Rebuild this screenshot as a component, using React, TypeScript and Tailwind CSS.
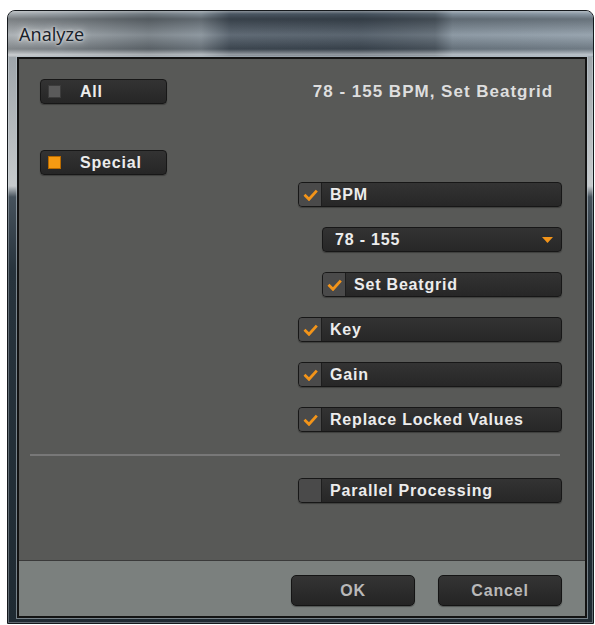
import React from "react";

const ORANGE = "#f39419";

function Tick() {
  return (
    <svg width="15" height="12" viewBox="0 0 15 12" fill="none">
      <path d="M1.5 5.8 L6 10.3 L13.8 1.6" stroke={ORANGE} strokeWidth="2.8" />
    </svg>
  );
}

function CheckRow({ label, checked }: { label: string; checked: boolean }) {
  return (
    <div className="flex h-[25px] overflow-hidden rounded-[4px] border border-[#171717] bg-[linear-gradient(180deg,#333333,#272727)] shadow-[0_1px_1px_rgba(0,0,0,0.3)]">
      <div className="flex w-[23px] items-center justify-center border-r border-[#1e1e1e] bg-[#4a4a4a]">
        {checked && <Tick />}
      </div>
      <span className="flex items-center pl-[8px] text-[16px] font-bold tracking-[0.8px] text-[#ececec]">
        {label}
      </span>
    </div>
  );
}

function ModeButton({ label, active }: { label: string; active: boolean }) {
  return (
    <div className="flex h-[25px] w-[127px] items-center rounded-[4px] border border-[#171717] bg-[linear-gradient(180deg,#333333,#262626)] pl-[7px] shadow-[0_1px_1px_rgba(0,0,0,0.3)]">
      <div
        className={
          active
            ? "h-[13px] w-[13px] border border-[#b86a00] bg-[#f59a12]"
            : "h-[13px] w-[13px] border border-[#3c3c3c] bg-[#5a5a5a]"
        }
      />
      <span className="ml-[19px] text-[16px] font-bold tracking-[0.8px] text-[#ececec]">
        {label}
      </span>
    </div>
  );
}

function FooterButton({ label }: { label: string }) {
  return (
    <button className="flex h-[31px] w-[124px] items-center justify-center rounded-[5px] border border-[#141414] bg-[linear-gradient(180deg,#343434,#242424)] text-[16px] font-bold tracking-[0.8px] text-[#b9b9b9] shadow-[0_1px_1px_rgba(0,0,0,0.35)]">
      {label}
    </button>
  );
}

export default function App() {
  return (
    <div className="h-[625px] w-[595px] overflow-hidden bg-white pt-[10px] pl-[7px] font-['Liberation_Sans',Arial,sans-serif]">
      {/* window frame */}
      <div className="flex h-[614px] w-[587px] flex-col rounded-t-[8px] border border-[#15191d] bg-[linear-gradient(180deg,#8e979e_0px,#a9afb3_80px,#c6cacc_175px,#46525c_186px,#27333c_260px,#1f2a32_100%)] shadow-[inset_0_0_0_1px_rgba(220,228,235,0.35)]">
        {/* title bar */}
        <div className="h-[46px] shrink-0 rounded-t-[7px] bg-[linear-gradient(180deg,rgba(255,255,255,0.35)_0px,rgba(255,255,255,0)_3px,rgba(0,0,0,0.25)_8px,rgba(255,255,255,0.12)_24px,rgba(0,0,0,0.2)_38px,rgba(255,255,255,0.45)_44px,rgba(255,255,255,0.1)_46px),linear-gradient(90deg,#a3a9ad_0%,#939ba1_9%,#6f787f_24%,#7f8a93_33%,#4a5662_38%,#44505c_60%,#56626d_73%,#7e8c98_76%,#8a98a4_100%)] pl-[11px] pt-[13px]">
          <span className="font-['Noto_Sans',sans-serif] text-[18px] leading-[18px] text-[#1b232b] [text-shadow:0_0_8px_rgba(255,255,255,0.9),0_0_3px_rgba(255,255,255,0.8)]">
            Analyze
          </span>
        </div>

        {/* dialog panel */}
        <div className="ml-[9px] flex h-[561px] w-[570px] flex-col border-2 border-[#131313] shadow-[0_0_0_1px_rgba(190,200,208,0.55)]">
          <div className="flex flex-1 flex-col bg-[#585957]">
            <div className="flex">
              <div className="ml-[21px] flex w-[127px] flex-col pt-[20px]">
                <ModeButton label="All" active={false} />
                <div className="mt-[46px]">
                  <ModeButton label="Special" active={true} />
                </div>
              </div>

              <div className="ml-auto mr-[23px] flex w-[264px] flex-col pt-[20px]">
                <div className="flex h-[25px] items-center justify-center pl-[6px] text-[17px] font-bold tracking-[1px] text-[#dedede]">
                  78 - 155 BPM, Set Beatgrid
                </div>
                <div className="mt-[78px]">
                  <CheckRow label="BPM" checked={true} />
                </div>
                <div className="ml-[24px] mt-[20px] flex h-[25px] items-center justify-between rounded-[4px] border border-[#171717] bg-[linear-gradient(180deg,#333333,#272727)] pl-[12px] pr-[8px] shadow-[0_1px_1px_rgba(0,0,0,0.3)]">
                  <span className="text-[16px] font-bold tracking-[0.8px] text-[#ececec]">
                    78 - 155
                  </span>
                  <svg width="11" height="6" viewBox="0 0 11 6">
                    <path d="M0 0 H11 L5.5 6 Z" fill={ORANGE} />
                  </svg>
                </div>
                <div className="ml-[24px] mt-[20px]">
                  <CheckRow label="Set Beatgrid" checked={true} />
                </div>
                <div className="mt-[20px]">
                  <CheckRow label="Key" checked={true} />
                </div>
                <div className="mt-[20px]">
                  <CheckRow label="Gain" checked={true} />
                </div>
                <div className="mt-[20px]">
                  <CheckRow label="Replace Locked Values" checked={true} />
                </div>
              </div>
            </div>

            <div className="ml-[11px] mr-[25px] mt-[22px] h-[2px] bg-[#787878]" />

            <div className="ml-auto mr-[23px] mt-[22px] w-[264px]">
              <CheckRow label="Parallel Processing" checked={false} />
            </div>
          </div>

          {/* footer */}
          <div className="flex h-[56px] shrink-0 items-start justify-end gap-[23px] border-t border-[#3a3a3a] bg-[#7b807e] pr-[23px] pt-[14px]">
            <FooterButton label="OK" />
            <FooterButton label="Cancel" />
          </div>
        </div>
      </div>
    </div>
  );
}
